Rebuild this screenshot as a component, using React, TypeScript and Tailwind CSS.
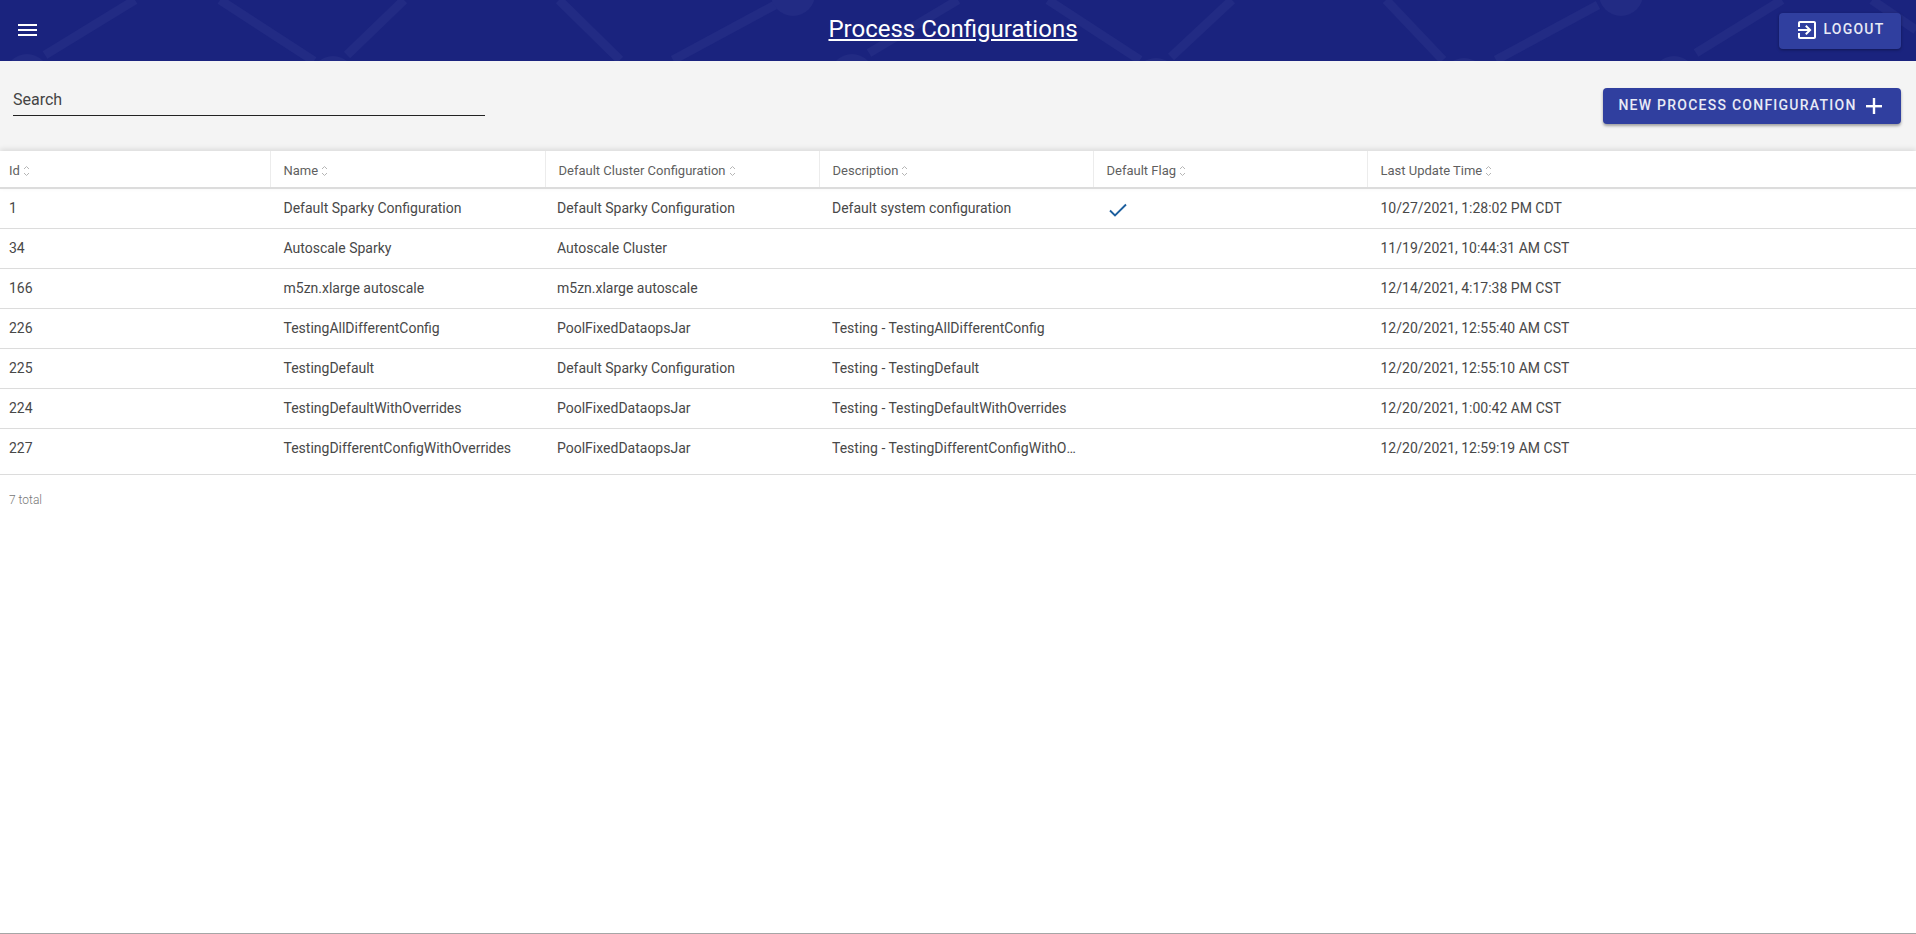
import React from "react";

const columns = ["Id", "Name", "Default Cluster Configuration", "Description", "Default Flag", "Last Update Time"];
const gridCols = "grid grid-cols-[270px_275px_274px_274px_274px_1fr]";

const rows = [
  { id: "1", name: "Default Sparky Configuration", cluster: "Default Sparky Configuration", desc: "Default system configuration", flag: true, time: "10/27/2021, 1:28:02 PM CDT", h: "h-[40px]" },
  { id: "34", name: "Autoscale Sparky", cluster: "Autoscale Cluster", desc: "", flag: false, time: "11/19/2021, 10:44:31 AM CST", h: "h-[40px]" },
  { id: "166", name: "m5zn.xlarge autoscale", cluster: "m5zn.xlarge autoscale", desc: "", flag: false, time: "12/14/2021, 4:17:38 PM CST", h: "h-[40px]" },
  { id: "226", name: "TestingAllDifferentConfig", cluster: "PoolFixedDataopsJar", desc: "Testing - TestingAllDifferentConfig", flag: false, time: "12/20/2021, 12:55:40 AM CST", h: "h-[40px]" },
  { id: "225", name: "TestingDefault", cluster: "Default Sparky Configuration", desc: "Testing - TestingDefault", flag: false, time: "12/20/2021, 12:55:10 AM CST", h: "h-[40px]" },
  { id: "224", name: "TestingDefaultWithOverrides", cluster: "PoolFixedDataopsJar", desc: "Testing - TestingDefaultWithOverrides", flag: false, time: "12/20/2021, 1:00:42 AM CST", h: "h-[40px]" },
  { id: "227", name: "TestingDifferentConfigWithOverrides", cluster: "PoolFixedDataopsJar", desc: "Testing - TestingDifferentConfigWithOverrides", flag: false, time: "12/20/2021, 12:59:19 AM CST", h: "h-[46px] pb-[6px]" },
];

function SortIcon() {
  return (
    <svg width="7" height="12" viewBox="0 0 7 12" fill="none" stroke="#b5b5b5" strokeWidth="1" className="ml-[3px] shrink-0">
      <path d="M1 4 L3.5 1.5 L6 4" />
      <path d="M1 8 L3.5 10.5 L6 8" />
    </svg>
  );
}

function HeaderPattern() {
  const lines = [
    [45, 55, 135, 0], [220, 0, 314, 61], [347, 55, 404, 0], [559, 0, 620, 60],
    [673, 60, 775, 5], [869, 53, 958, 0], [1048, 0, 1140, 60], [1171, 57, 1232, 0],
    [1386, 0, 1443, 60], [1496, 60, 1598, 5], [1696, 53, 1782, 0], [1872, 0, 1916, 30],
  ];
  const circles = [[27, 76], [333, 78], [852, 76], [1156, 80], [793, -6], [1464, 80], [1621, -6], [1674, 78]];
  return (
    <svg width="1916" height="61" viewBox="0 0 1916 61" className="absolute inset-0" fill="none">
      {lines.map((l, i) => (
        <line key={i} x1={l[0]} y1={l[1]} x2={l[2]} y2={l[3]} stroke="#222b84" strokeWidth="9" />
      ))}
      {circles.map((c, i) => (
        <circle key={i} cx={c[0]} cy={c[1]} r="22" fill="#222b84" />
      ))}
    </svg>
  );
}

export default function App() {
  return (
    <div className="flex h-[934px] flex-col border-b border-[#a6a6a6] bg-white font-['Roboto',sans-serif] overflow-hidden">
      <header className="relative flex h-[61px] shrink-0 items-center justify-between bg-[#1a237e] pl-[18px] pr-[15px]">
        <HeaderPattern />
        <svg width="19" height="13" viewBox="0 0 19 13" className="relative">
          <rect x="0" y="0" width="19" height="2" fill="#fff" />
          <rect x="0" y="5" width="19" height="2" fill="#fff" />
          <rect x="0" y="10" width="19" height="2" fill="#fff" />
        </svg>
        <h1 className="absolute left-0 right-[10px] top-[12px] text-center text-[24px] leading-[34px] text-white underline">
          Process Configurations
        </h1>
        <button className="relative flex h-[36px] w-[122px] items-center justify-center gap-[4px] rounded-[4px] bg-[#303f9f] pb-[2px] text-[14px] font-medium uppercase tracking-[1.25px] text-[#e8eaf6] shadow-[0_1px_3px_rgba(0,0,0,0.35)]">
          <svg width="24" height="24" viewBox="0 0 24 24" fill="#fff">
            <path d="M10.09 15.59L11.5 17l5-5-5-5-1.41 1.41L12.67 11H3v2h9.67l-2.58 2.59zM19 3H5c-1.11 0-2 .9-2 2v4h2V5h14v14H5v-4H3v4c0 1.1.89 2 2 2h14c1.1 0 2-.9 2-2V5c0-1.1-.9-2-2-2z" />
          </svg>
          Logout
        </button>
      </header>

      <section className="flex h-[90px] shrink-0 items-center justify-between bg-[#f4f4f4] pl-[13px] pr-[15px]">
        <div className="mb-[10px] flex h-[30px] w-[472px] items-center border-b border-[#222] pb-[1px] text-[16px] text-[#444]">
          Search
        </div>
        <button className="flex h-[36px] w-[298px] items-center justify-center gap-[7px] rounded-[4px] bg-[#303f9f] pb-[1px] pl-[1px] pr-[3px] text-[14px] font-medium uppercase tracking-[1.25px] text-[#e8eaf6] shadow-[0_2px_3px_rgba(0,0,0,0.35)]">
          New Process Configuration
          <svg width="20" height="20" viewBox="0 0 20 20" fill="#fff">
            <rect x="2" y="9" width="16" height="2.4" />
            <rect x="8.8" y="2" width="2.4" height="16" />
          </svg>
        </button>
      </section>

      <main className="relative">
        <div className={`${gridCols} h-[38px] items-stretch border-b-2 border-[#dcdcdc] bg-white shadow-[0_-2px_5px_rgba(0,0,0,0.1)]`}>
          {columns.map((c, i) => (
            <div
              key={c}
              className={`flex items-center pt-[4px] text-[13px] text-[#5f5f5f] ${i === 0 ? "pl-[9px]" : "pl-[12.5px] border-l border-[#ececec]"}`}
            >
              {c}
              <SortIcon />
            </div>
          ))}
        </div>
        {rows.map((r) => (
          <div key={r.id} className={`${gridCols} ${r.h} items-center border-b border-[#dcdcdc] text-[14px] text-[#484848]`}>
            <div className="pl-[9px]">{r.id}</div>
            <div className="pl-[13.5px]">{r.name}</div>
            <div className="pl-[12px]">{r.cluster}</div>
            <div className="truncate pl-[13px] pr-[14px]">{r.desc}</div>
            <div className="pl-[16px]">
              {r.flag && (
                <svg width="18" height="14" viewBox="0 0 18 14" fill="none" stroke="#1d5f9e" strokeWidth="1.9" className="mt-[3px]">
                  <path d="M1 7.5 L6 12.5 L17 1.5" />
                </svg>
              )}
            </div>
            <div className="pl-[13.5px]">{r.time}</div>
          </div>
        ))}
        <div className="pl-[9px] pt-[16px] text-[12px] font-light text-[#777]">7 total</div>
      </main>
    </div>
  );
}
